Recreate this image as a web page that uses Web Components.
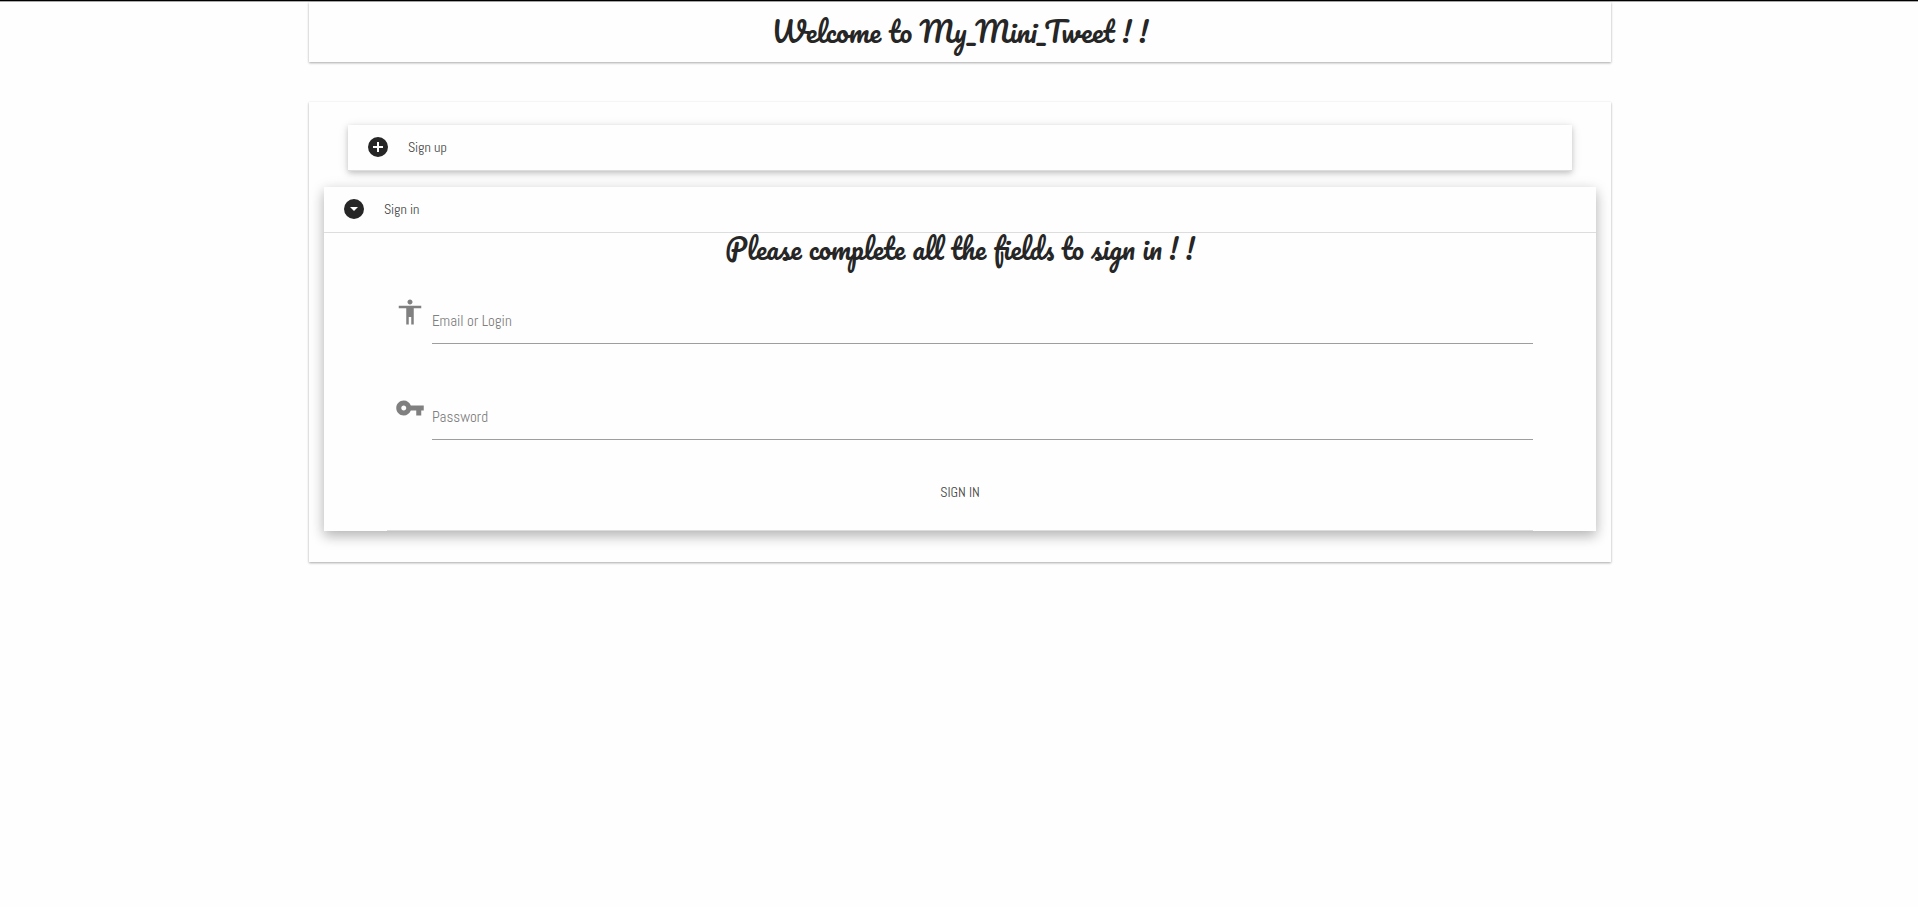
<!DOCTYPE html>
<html lang="en">
<head>
<meta charset="utf-8">
<title>My_Mini_Tweet</title>
<style>
  html { background: #fefefe; }
  body {
    margin: 0;
    border-top: 1px solid #000;
    color: #444;
    font: 14px/20px Abel, "Liberation Sans Narrow", "Roboto Condensed", "Liberation Sans", sans-serif;
    --script: Satisfy, Pacifico, "Liberation Serif", serif;
    --surface: #fefefe;
    --ink: #262626;
  }
  main {
    display: grid;
    gap: 40px;
    width: calc(68% - 2px);
    margin: 0 auto;
    padding: 0 0 40px 2px;
    border-top: 1px solid #aaa;
    border-image: linear-gradient(#aaa, #aaa) 1 / 1px 0 0 / 0 100vw;
    clip-path: inset(0 -100vw);
  }
</style>
</head>
<body>
<main>
  <tweet-card><tweet-title>Welcome to My_Mini_Tweet ! !</tweet-title></tweet-card>
  <tweet-card class="panel">
    <tweet-accordion>
      <accordion-item label="Sign up"></accordion-item>
      <accordion-item label="Sign in" open>
        <sign-in-form></sign-in-form>
      </accordion-item>
    </tweet-accordion>
  </tweet-card>
</main>
<script>
const attach = (el, html) => { el.attachShadow({ mode: 'open' }).innerHTML = html; };

customElements.define('tweet-card', class extends HTMLElement {
  constructor() {
    super();
    attach(this, `<style>
      :host { display: block; background: var(--surface); padding: 8px 0; box-shadow: 0 1px 3px rgba(0,0,0,.12), 0 1px 2px rgba(0,0,0,.24); }
      :host(.panel) { padding: 23px 15px 31px; }
    </style><slot></slot>`);
  }
});

customElements.define('tweet-title', class extends HTMLElement {
  constructor() {
    super();
    attach(this, `<style>
      :host { display: block; --size: 28px; }
      :host(.small) { --size: 27px; }
      h1 { margin: 0; color: var(--ink); font: normal var(--size)/44px var(--script); text-align: center; white-space: nowrap; }
      :host(.small) h1 { line-height: 32px; }
    </style><h1><slot></slot></h1>`);
  }
});

customElements.define('tweet-accordion', class extends HTMLElement {
  constructor() {
    super();
    attach(this, `<style>
      :host { display: grid; gap: 16px; }
    </style><slot></slot>`);
  }
});

customElements.define('accordion-item', class extends HTMLElement {
  constructor() {
    super();
    attach(this, `<style>
      :host { display: block; margin: 0 24px; background: var(--surface); box-shadow: 0 2px 5px rgba(0,0,0,.16), 0 2px 10px rgba(0,0,0,.12); }
      :host([open]) { margin: 0; box-shadow: 0 5px 11px rgba(0,0,0,.18), 0 4px 15px rgba(0,0,0,.15); }
      button { display: flex; align-items: center; gap: 16px; box-sizing: border-box; width: 100%; height: 46px; padding: 0 16px 2px; border: 0; border-bottom: 1px solid #ddd; background: none; color: inherit; font: inherit; cursor: pointer; }
      svg { width: 28px; height: 24px; fill: var(--ink); }
      .body { display: none; }
      :host([open]) .body { display: block; margin: 0 63px; border-bottom: 1px solid #ddd; }
      .opened, :host([open]) .closed { display: none; }
      :host([open]) .opened { display: block; }
    </style>
    <button type="button">
      <svg class="closed" viewBox="0 0 24 24" aria-hidden="true"><path d="M12 2a10 10 0 1 0 0 20 10 10 0 0 0 0-20zm5 11h-4v4h-2v-4H7v-2h4V7h2v4h4v2z"/></svg>
      <svg class="opened" viewBox="0 0 24 24" aria-hidden="true"><path d="M12 2a10 10 0 1 0 0 20 10 10 0 0 0 0-20zm0 12l-4-4h8l-4 4z"/></svg>
      <span></span>
    </button>
    <div class="body"><slot></slot></div>`);
    this.shadowRoot.querySelector('button').addEventListener('click', () => this.toggleAttribute('open'));
  }
  static get observedAttributes() { return ['label', 'open']; }
  attributeChangedCallback() {
    this.shadowRoot.querySelector('span').textContent = this.getAttribute('label');
    this.shadowRoot.querySelector('button').setAttribute('aria-expanded', this.hasAttribute('open'));
  }
});

const fieldIcons = {
  person: 'M12 2c1.1 0 2 .9 2 2s-.9 2-2 2-2-.9-2-2 .9-2 2-2zm9 7h-6v13h-2v-6h-2v6H9V9H3V7h18v2z',
  key: 'M12.65 10C11.83 7.67 9.61 6 7 6c-3.31 0-6 2.69-6 6s2.69 6 6 6c2.61 0 4.83-1.67 5.65-4H17v4h4v-4h2v-4H12.65zM7 14c-1.1 0-2-.9-2-2s.9-2 2-2 2 .9 2 2-.9 2-2 2z'
};

customElements.define('text-field', class extends HTMLElement {
  connectedCallback() {
    if (this.shadowRoot) return;
    attach(this, `<style>
      :host { display: flex; gap: 7px; color: #808080; }
      svg { flex: none; width: 30px; height: 32px; fill: currentColor; }
      .box { flex: 1; display: grid; }
      input, label { grid-area: 1 / 1; font-size: 15px; }
      input { box-sizing: border-box; width: 100%; height: 48px; margin: 0; padding: 0; border: 0; border-bottom: 1px solid #9e9e9e; outline: 0; background: none; color: #444; font-family: inherit; }
      label { align-self: center; padding-top: 2px; pointer-events: none; }
      input:not(:placeholder-shown) + label { visibility: hidden; }
    </style>
    <svg viewBox="0 0 24 24" aria-hidden="true"><path d="${fieldIcons[this.getAttribute('icon')]}"/></svg>
    <div class="box"><input id="field" type="${this.getAttribute('type')}" placeholder=" "><label for="field">${this.getAttribute('label')}</label></div>`);
  }
});

customElements.define('sign-in-form', class extends HTMLElement {
  constructor() {
    super();
    attach(this, `<style>
      :host { display: block; }
      tweet-title { margin-bottom: 31px; }
      form { display: grid; gap: 48px; padding: 0 0 20px 8px; }
      form > div { display: grid; place-items: center; margin: -14px 0 0 -8px; }
      button { height: 36px; padding: 0 24px; border: 0; background: none; color: inherit; font: inherit; text-transform: uppercase; cursor: pointer; }
    </style>
    <tweet-title class="small">Please complete all the fields to sign in ! !</tweet-title>
    <form>
      <text-field icon="person" type="text" label="Email or Login"></text-field>
      <text-field icon="key" type="password" label="Password"></text-field>
      <div><button type="button">Sign in</button></div>
    </form>`);
  }
});
</script>
</body>
</html>
